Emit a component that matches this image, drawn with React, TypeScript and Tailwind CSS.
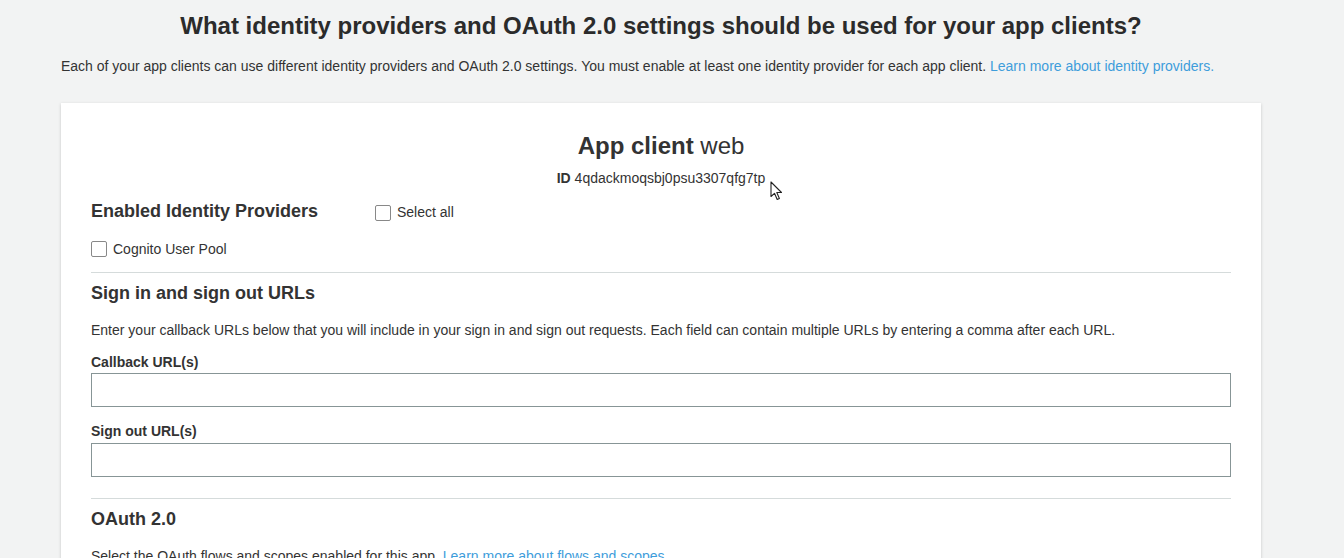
export default function App() {
    return (
        <div className="min-h-[558px] bg-[#f2f3f3] text-[#333] font-['Liberation_Sans',Arial,sans-serif] overflow-hidden h-[558px] relative">
            <div className="ml-[61px] w-[1200px]">
                <h1 className="pt-[11px] text-center text-[24px] leading-[30px] font-bold text-[#2b2b2b]">
                    What identity providers and OAuth 2.0 settings should be used for your app clients?
                </h1>
                <p className="mt-[15px] text-[14px] leading-[20px]">
                    Each of your app clients can use different identity providers and OAuth 2.0 settings. You must enable at least one identity provider for each app client.{" "}
                    <a className="text-[#3e9ddb]" href="#">Learn more about identity providers.</a>
                </p>

                <div className="mt-[27px] bg-white shadow-[0_1px_3px_rgba(0,0,0,0.18)] px-[30px] pt-[27px] pb-8">
                    <div className="text-center">
                        <h2 className="text-[24px] leading-[32px]">
                            <span className="font-bold">App client</span> web
                        </h2>
                        <div className="mt-[8px] text-[14px] leading-[16px]">
                            <span className="font-bold">ID</span> 4qdackmoqsbj0psu3307qfg7tp
                        </div>
                    </div>

                    {/* Identity providers */}
                    <div className="mt-[12px] flex items-center">
                        <h3 className="w-[284px] text-[18px] leading-[24px] font-bold">Enabled Identity Providers</h3>
                        <label className="flex items-center gap-[6px] text-[14px] mt-[4px]">
                            <span className="w-4 h-4 border border-[#888] rounded-[2px] bg-white" />
                            Select all
                        </label>
                    </div>
                    <label className="mt-[17px] flex items-center gap-[6px] text-[14px] leading-[18px]">
                        <span className="w-4 h-4 border border-[#888] rounded-[2px] bg-white" />
                        Cognito User Pool
                    </label>

                    <hr className="mt-[14px] border-t border-[#d5dbdb]" />

                    {/* Sign in / sign out */}
                    <h3 className="mt-[8px] text-[18px] leading-[24px] font-bold">Sign in and sign out URLs</h3>
                    <p className="mt-[16px] text-[14px] leading-[18px]">
                        Enter your callback URLs below that you will include in your sign in and sign out requests. Each field can contain multiple URLs by entering a comma after each URL.
                    </p>
                    <div className="mt-[14px] text-[14px] leading-[18px] font-bold">Callback URL(s)</div>
                    <input className="mt-[2px] block w-full h-[34px] border border-[#879596] bg-white" />
                    <div className="mt-[15px] text-[14px] leading-[18px] font-bold">Sign out URL(s)</div>
                    <input className="mt-[3px] block w-full h-[34px] border border-[#879596] bg-white" />

                    <hr className="mt-[21px] border-t border-[#d5dbdb]" />

                    <h3 className="mt-[8px] text-[18px] leading-[24px] font-bold">OAuth 2.0</h3>
                    <p className="mt-[16px] text-[14px] leading-[18px]">
                        Select the OAuth flows and scopes enabled for this app.{" "}
                        <a className="text-[#3e9ddb]" href="#">Learn more about flows and scopes.</a>
                    </p>
                </div>
            </div>

            {/* mouse pointer */}
            <svg className="absolute left-[770px] top-[181px]" width="13" height="20" viewBox="0 0 13 20">
                <path d="M1 1 L1 15.5 L4.5 12.3 L7.2 18.5 L9.4 17.5 L6.8 11.5 L11.5 11.5 Z" fill="white" stroke="#222" strokeWidth="1.1" strokeLinejoin="round" />
            </svg>
        </div>
    )
}
